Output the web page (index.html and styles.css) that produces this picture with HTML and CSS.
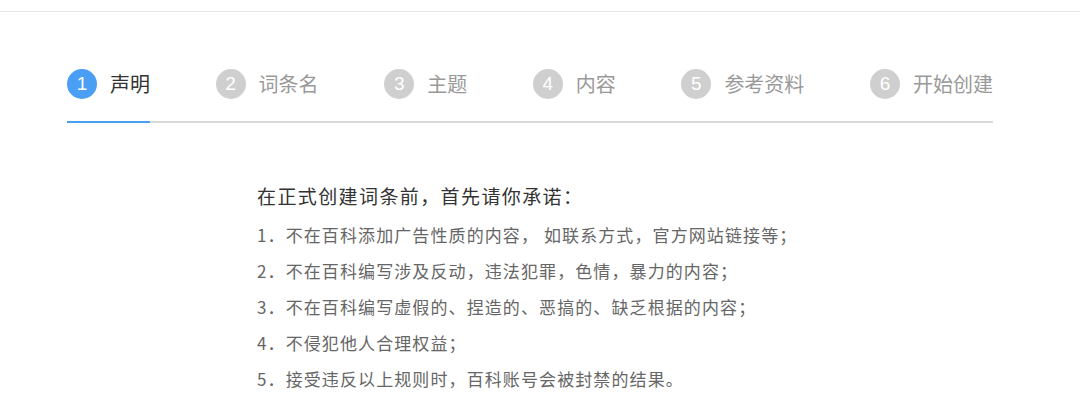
FILE: index.html
```html
<!DOCTYPE html>
<html lang="zh-CN">
<head>
  <meta charset="UTF-8">
  <meta name="viewport" content="width=device-width, initial-scale=1.0">
  <title>创建词条</title>
  <link rel="stylesheet" href="styles.css">
</head>

<body>
  <!-- Top bar -->
  <div class="topbar"></div>

  <!-- Steps -->
  <div class="steps">
    <ul class="step-list">
      <li class="step active"><span class="num">1</span><span class="label">声明</span></li>
      <li class="step"><span class="num">2</span><span class="label">词条名</span></li>
      <li class="step"><span class="num">3</span><span class="label">主题</span></li>
      <li class="step"><span class="num">4</span><span class="label">内容</span></li>
      <li class="step"><span class="num">5</span><span class="label">参考资料</span></li>
      <li class="step"><span class="num">6</span><span class="label">开始创建</span></li>
    </ul>
    <div class="step-line"><div class="step-progress"></div></div>
  </div>

  <!-- Statement -->
  <div class="statement">
    <h2>在正式创建词条前，首先请你承诺：</h2>
    <ol class="rules">
      <li>1．不在百科添加广告性质的内容， 如联系方式，官方网站链接等；</li>
      <li>2．不在百科编写涉及反动，违法犯罪，色情，暴力的内容；</li>
      <li>3．不在百科编写虚假的、捏造的、恶搞的、缺乏根据的内容；</li>
      <li>4．不侵犯他人合理权益；</li>
      <li>5．接受违反以上规则时，百科账号会被封禁的结果。</li>
    </ol>
  </div>
</body>

</html>
```

FILE: styles.css
```css
* {
    box-sizing: border-box;
}
body {
    margin: 0;
    background: #fff;
    font-family: "Noto Sans CJK SC", "Noto Sans", sans-serif;
    color: #333;
}
.topbar {
    height: 12px;
    border-bottom: 1px solid #e6e6e6;
}

/* Steps */
.steps {
    margin: 57px 0 0 67px;
    width: 926px;
}
.step-list {
    display: flex;
    justify-content: space-between;
    margin: 0;
    padding: 0;
}
.step {
    list-style: none;
    display: flex;
    align-items: center;
    height: 30px;
}
.num {
    width: 30px;
    height: 30px;
    border-radius: 50%;
    background: #cfcfcf;
    color: #fff;
    font-family: "Liberation Sans", Arial, sans-serif;
    font-size: 19px;
    line-height: 30px;
    text-align: center;
    margin-right: 13px;
}
.label {
    font-size: 20px;
    line-height: 30px;
    color: #999;
}
.step.active .num {
    background: #4a9ff5;
}
.step.active .label {
    color: #333;
}
.step-line {
    margin-top: 22px;
    height: 2px;
    background: #d9d9d9;
}
.step-progress {
    width: 83px;
    height: 2px;
    background: #4a9ff5;
}

/* Statement */
.statement {
    margin: 61px 0 0 257px;
}
.statement h2 {
    margin: 0;
    font-size: 19px;
    font-weight: normal;
    line-height: 24px;
    letter-spacing: 1.4px;
    color: #333;
}
.rules {
    margin: 9px 0 0;
    padding: 0;
}
.rules li {
    list-style: none;
    font-size: 17px;
    line-height: 36px;
    letter-spacing: 1.1px;
    color: #666;
}
```
